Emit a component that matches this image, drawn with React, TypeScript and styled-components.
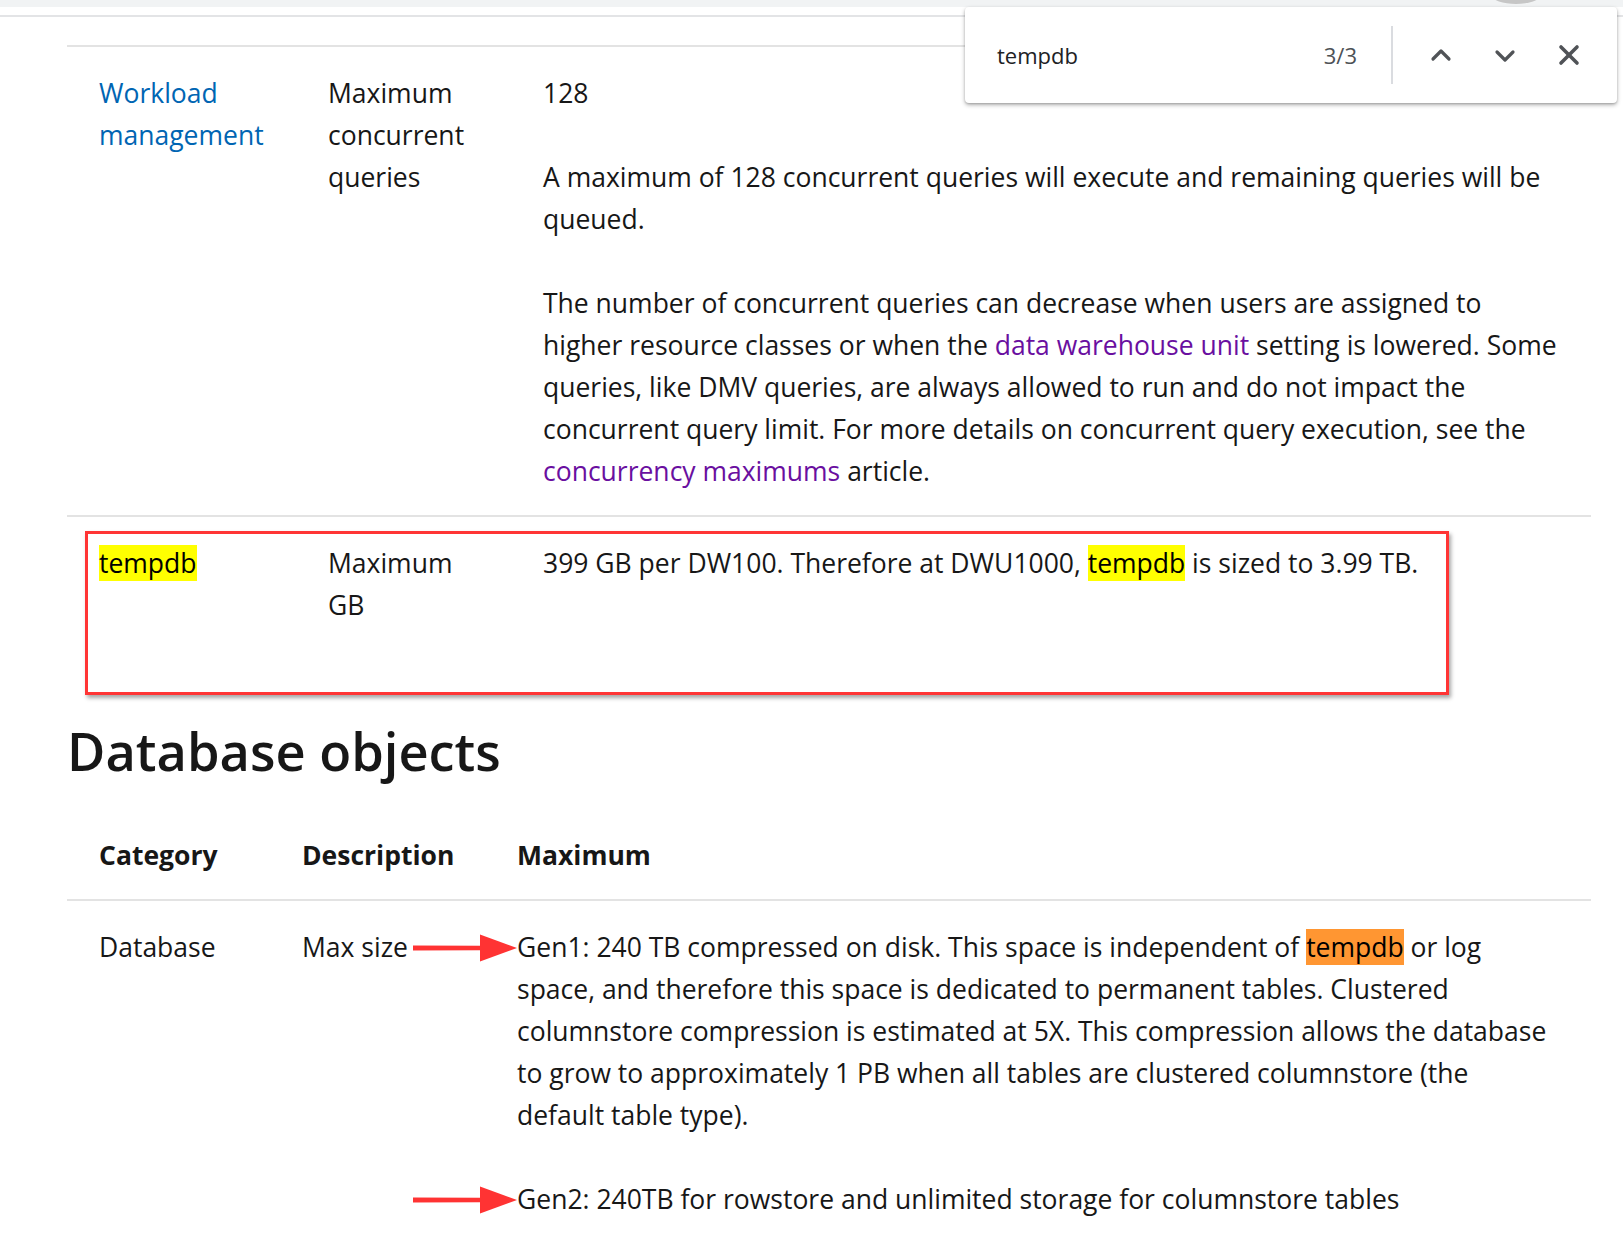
import React from "react";
import styled, { createGlobalStyle } from "styled-components";

const GlobalStyle = createGlobalStyle`
  html, body { margin: 0; padding: 0; background: #ffffff; }
  body {
    font-family: "Open Sans", "Noto Sans", "Liberation Sans", sans-serif;
    color: #171717;
  }
`;

const Page = styled.div`
  position: relative;
  width: 1623px;
  height: 1236px;
  overflow: hidden;
  background: #ffffff;
`;

const BrowserStrip = styled.div`
  height: 7px;
  background: #f1f3f4;
`;

const StripKnob = styled.div`
  position: absolute;
  top: -13px;
  left: 1492px;
  width: 48px;
  height: 17px;
  border-radius: 50%;
  background: #c6c6c6;
`;

const TopRule = styled.div`
  margin-top: 8px;
  height: 2px;
  background: #e3e4e6;
`;

const Article = styled.main`
  padding: 28px 32px 0 67px;
  font-size: 26.5px;
  line-height: 42px;
`;

const Table = styled.div`
  display: flex;
  flex-direction: column;
`;

const Row = styled.div<{ $cols: string; $top?: boolean; $bottom?: boolean }>`
  position: relative;
  display: grid;
  grid-template-columns: ${(p) => p.$cols};
  border-top: ${(p) => (p.$top ? "2px solid #e3e3e3" : "none")};
  border-bottom: ${(p) => (p.$bottom ? "2px solid #e3e3e3" : "none")};
`;

const Cell = styled.div<{ $head?: boolean }>`
  padding: 25px 16px 23px 32px;
  font-weight: ${(p) => (p.$head ? 700 : 400)};
  white-space: nowrap;
`;

const Para = styled.p`
  margin: 0 0 42px;
  &:last-child { margin-bottom: 0; }
`;

const Link = styled.a<{ $visited?: boolean }>`
  color: ${(p) => (p.$visited ? "#6a0fa0" : "#0065b3")};
  text-decoration: none;
`;

const Match = styled.span<{ $active?: boolean }>`
  background: ${(p) => (p.$active ? "#ff9632" : "#ffff00")};
  color: #000;
`;

const Heading = styled.h2`
  margin: 68px 0 24px;
  font-size: 52.4px;
  line-height: 68px;
  font-weight: 600;
  color: #171717;
`;

const Annotation = styled.div`
  position: absolute;
  left: 18px;
  top: 14px;
  width: 1358px;
  height: 158px;
  border: 3px solid #ff3535;
  box-shadow: 2px 3px 4px rgba(0, 0, 0, 0.35);
  pointer-events: none;
`;

const ArrowSvg = styled.svg<{ $top: number }>`
  position: absolute;
  left: 346px;
  top: ${(p) => p.$top}px;
  width: 104px;
  height: 30px;
  overflow: visible;
`;

const Arrow = ({ top }: { top: number }) => (
  <ArrowSvg $top={top} viewBox="0 0 104 30">
    <path d="M0 12.5 L68 12.8 L68 17.2 L0 17.5 Z" fill="#ff3333" />
    <polygon points="67,1.5 104,15 67,28.5" fill="#ff3333" />
  </ArrowSvg>
);

const FindBar = styled.div`
  position: absolute;
  top: 7px;
  left: 965px;
  width: 652px;
  height: 96px;
  box-sizing: border-box;
  display: flex;
  align-items: center;
  padding: 0 16px 0 32px;
  background: #ffffff;
  border-radius: 4px;
  box-shadow: 0 2px 4px rgba(0, 0, 0, 0.3), 0 1px 2px rgba(0, 0, 0, 0.15);
`;

const FindQuery = styled.span`
  flex: 1;
  font-size: 22px;
  color: #202124;
`;

const FindCount = styled.span`
  font-size: 22px;
  color: #4d5156;
  margin-right: 34px;
`;

const FindDivider = styled.div`
  width: 2px;
  height: 58px;
  background: #dadce0;
  margin-right: 16px;
`;

const FindButton = styled.button`
  width: 64px;
  height: 48px;
  border: none;
  background: transparent;
  padding: 0;
  display: flex;
  align-items: center;
  justify-content: center;
  cursor: pointer;
`;

const Icon = styled.svg`
  width: 22px;
  height: 22px;
  stroke: #505357;
  fill: none;
  stroke-width: 3.2;
  stroke-linecap: round;
  stroke-linejoin: round;
`;

const COLS1 = "229px 215px 1fr";
const COLS2 = "203px 215px 1fr";

export default function App() {
  return (
    <Page>
      <GlobalStyle />
      <BrowserStrip />
      <StripKnob />
      <TopRule />
      <Article>
        <Table>
          <Row $cols={COLS1} $top>
            <Cell>
              <Link href="#">Workload<br />management</Link>
            </Cell>
            <Cell>
              Maximum<br />concurrent<br />queries
            </Cell>
            <Cell>
              <Para>128</Para>
              <Para>
                A maximum of 128 concurrent queries will execute and remaining queries will be<br />
                queued.
              </Para>
              <Para>
                The number of concurrent queries can decrease when users are assigned to<br />
                higher resource classes or when the <Link href="#" $visited>data warehouse unit</Link> setting is lowered. Some<br />
                queries, like DMV queries, are always allowed to run and do not impact the<br />
                concurrent query limit. For more details on concurrent query execution, see the<br />
                <Link href="#" $visited>concurrency maximums</Link> article.
              </Para>
            </Cell>
          </Row>
          <Row $cols={COLS1} $top>
            <Cell>
              <Match>tempdb</Match>
            </Cell>
            <Cell>
              Maximum<br />GB
            </Cell>
            <Cell>
              399 GB per DW100. Therefore at DWU1000, <Match>tempdb</Match> is sized to 3.99 TB.
            </Cell>
            <Annotation />
          </Row>
        </Table>

        <Heading>Database objects</Heading>

        <Table>
          <Row $cols={COLS2} $bottom>
            <Cell $head>Category</Cell>
            <Cell $head>Description</Cell>
            <Cell $head>Maximum</Cell>
          </Row>
          <Row $cols={COLS2}>
            <Cell>Database</Cell>
            <Cell>Max size</Cell>
            <Cell>
              <Para>
                Gen1: 240 TB compressed on disk. This space is independent of <Match $active>tempdb</Match> or log<br />
                space, and therefore this space is dedicated to permanent tables. Clustered<br />
                columnstore compression is estimated at 5X. This compression allows the database<br />
                to grow to approximately 1 PB when all tables are clustered columnstore (the<br />
                default table type).
              </Para>
              <Para>Gen2: 240TB for rowstore and unlimited storage for columnstore tables</Para>
            </Cell>
            <Arrow top={32} />
            <Arrow top={284} />
          </Row>
        </Table>
      </Article>

      <FindBar>
        <FindQuery>tempdb</FindQuery>
        <FindCount>3/3</FindCount>
        <FindDivider />
        <FindButton aria-label="Previous">
          <Icon viewBox="0 0 22 22">
            <polyline points="3,15 11,7 19,15" />
          </Icon>
        </FindButton>
        <FindButton aria-label="Next">
          <Icon viewBox="0 0 22 22">
            <polyline points="3,8 11,16 19,8" />
          </Icon>
        </FindButton>
        <FindButton aria-label="Close">
          <Icon viewBox="0 0 22 22" style={{ strokeWidth: 3.6 }}>
            <line x1="3" y1="3" x2="19" y2="19" />
            <line x1="19" y1="3" x2="3" y2="19" />
          </Icon>
        </FindButton>
      </FindBar>
    </Page>
  );
}
